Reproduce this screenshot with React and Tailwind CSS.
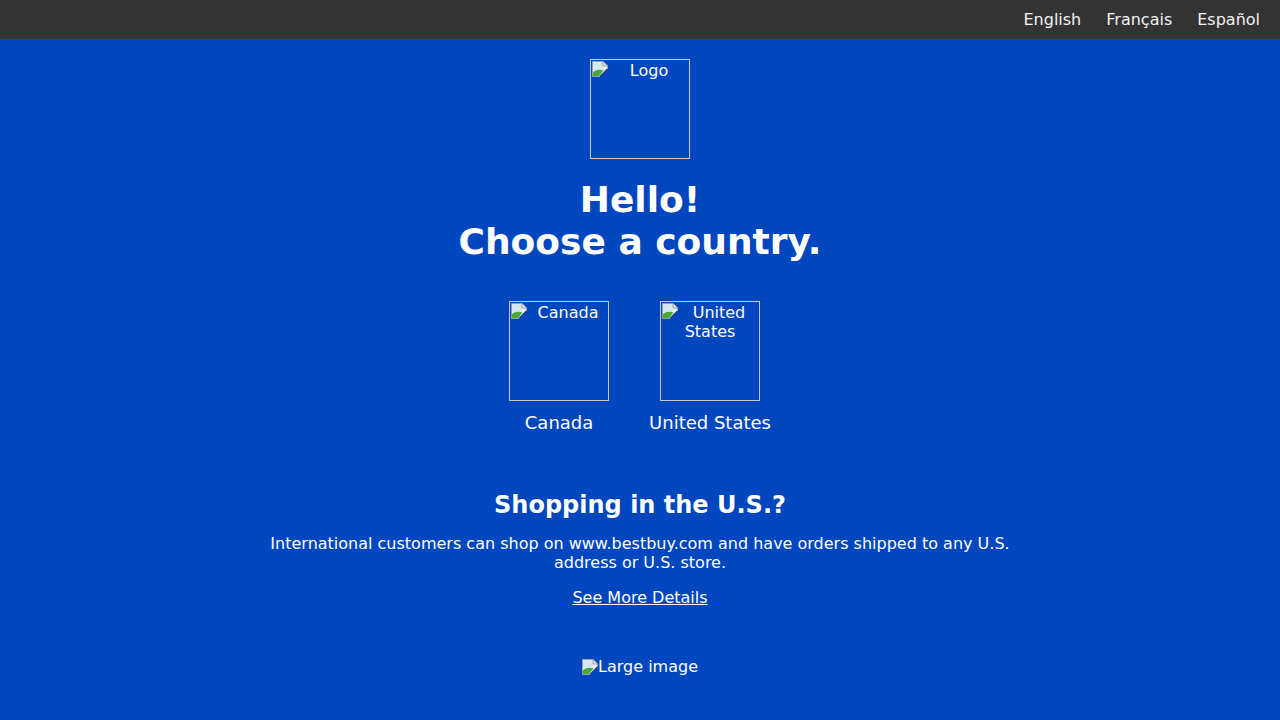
import React from "react";

function BrokenIcon({ className = "" }) {
  return (
    <svg width="16" height="16" viewBox="0 0 16 16" className={className}>
      <path d="M0.5 0.5 H11 L15.5 5 V8 L8 15.5 H0.5 Z" fill="#eef2f6" stroke="#9aa0a6" strokeWidth="1" />
      <rect x="1" y="1" width="10" height="8" fill="#d6e6f2" />
      <path d="M11 0.5 V5 H15.5" fill="#e3e6ea" stroke="#9aa0a6" strokeWidth="1" />
      <path d="M1 11 C4 8.5, 8 8, 11.5 9.5 L7 15 H1 Z" fill="#49a83a" />
      <path d="M8 15.5 L15.5 8" stroke="#1d3f8f" strokeWidth="1.4" />
    </svg>
  );
}

function ImgBox({ alt }) {
  return (
    <div className="w-[100px] h-[100px] border border-[#c8c8c8] text-center text-base leading-[19px] pt-[1px] overflow-hidden">
      <BrokenIcon className="float-left ml-[1px] mr-[1px]" />
      <span>{alt}</span>
    </div>
  );
}

export default function App() {
  return (
    <div
      className="min-h-[720px] bg-[#0046be] text-white"
      style={{ fontFamily: '"DejaVu Sans", sans-serif' }}
    >
      <header className="h-[39px] bg-[#333333] flex items-center justify-end gap-[25px] pr-5 text-base text-[#f2f2f2]">
        <span>English</span>
        <span>Français</span>
        <span>Español</span>
      </header>
      <main className="flex flex-col items-center pt-5">
        <ImgBox alt="Logo" />
        <h1 className="mt-5 text-[36px] leading-[42px] font-bold text-center">
          Hello!
          <br />
          Choose a country.
        </h1>
        <div className="mt-[38px] flex gap-10 items-start">
          <div className="flex flex-col items-center">
            <ImgBox alt="Canada" />
            <div className="mt-[11px] text-[18px] leading-[21px]">Canada</div>
          </div>
          <div className="flex flex-col items-center">
            <ImgBox alt="United States" />
            <div className="mt-[11px] text-[18px] leading-[21px]">United States</div>
          </div>
        </div>
        <h2 className="mt-[58px] text-[24px] leading-[28px] font-bold">Shopping in the U.S.?</h2>
        <p className="mt-[15px] w-[760px] text-center text-base leading-[19px]">
          International customers can shop on www.bestbuy.com and have orders shipped to any U.S. address or U.S. store.
        </p>
        <a className="mt-4 text-base leading-[19px] underline">See More Details</a>
        <div className="mt-[50px] flex items-center text-base leading-[19px]">
          <BrokenIcon />
          <span>Large image</span>
        </div>
      </main>
    </div>
  );
}
